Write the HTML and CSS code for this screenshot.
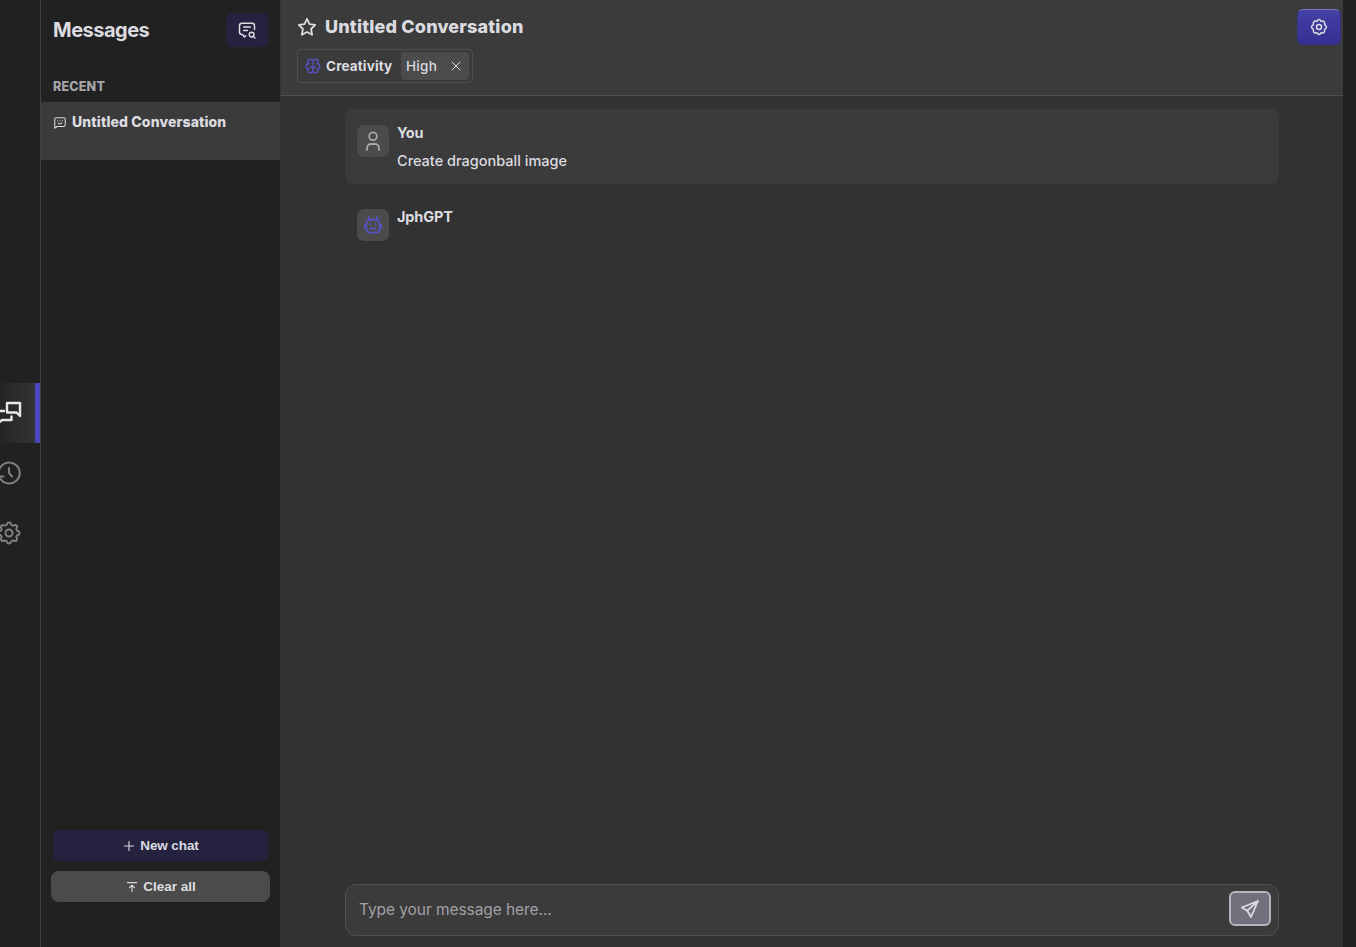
FILE: index.html
```
<!DOCTYPE html>
<html lang="en">
<head>
  <meta charset="UTF-8" />
  <meta name="viewport" content="width=device-width, initial-scale=1.0" />
  <title>JphGPT</title>
  <link rel="stylesheet" href="styles.css">
</head>
<body>
  <div class="app">
    <nav class="rail">
      <a class="rail-item active">
        <svg width="26" height="26" viewBox="0 0 26 26"><path d="M11 3h13v13l-3.500-3.500H11zM8 11H2M2 23.500l4-3.500h9.500v-3.500"/></svg>
      </a>
      <a class="rail-item">
        <svg width="26" height="26" viewBox="0 0 26 26"><path d="M3.300 16.500a10.500 10.500 0 1 0-.500-5M3 21v-4.500h4.500M13 8v5l3 3.500"/></svg>
      </a>
      <a class="rail-item">
        <svg width="28" height="28" viewBox="0 0 24 24"><path d="M10.325 4.317c.426-1.756 2.924-1.756 3.350 0a1.724 1.724 0 0 0 2.573 1.066c1.543-.940 3.310.826 2.370 2.370a1.724 1.724 0 0 0 1.065 2.572c1.756.426 1.756 2.924 0 3.350a1.724 1.724 0 0 0-1.066 2.573c.940 1.543-.826 3.310-2.370 2.370a1.724 1.724 0 0 0-2.572 1.065c-.426 1.756-2.924 1.756-3.350 0a1.724 1.724 0 0 0-2.573-1.066c-1.543.940-3.310-.826-2.370-2.370a1.724 1.724 0 0 0-1.065-2.572c-1.756-.426-1.756-2.924 0-3.350a1.724 1.724 0 0 0 1.066-2.573c-.940-1.543.826-3.310 2.370-2.370 1 .608 2.296.070 2.572-1.065z"/><circle cx="12" cy="12" r="3"/></svg>
      </a>
    </nav>

    <aside class="sidebar">
      <header class="sidebar-head">
        <h2>Messages</h2>
        <button class="search-btn">
          <svg width="20" height="20" viewBox="0 0 24 24"><path d="M8 8.500h8M8 12.500h4.500M10.500 19L9 20.500 6.500 17.500H6a3 3 0 0 1-3-3V7a3 3 0 0 1 3-3h12a3 3 0 0 1 3 3v4.500M19.500 19.500L21.500 21.500"/><circle cx="17.500" cy="17.500" r="2.800"/></svg>
        </button>
      </header>
      <h3>RECENT</h3>
      <div class="chat-item">
        <svg width="14" height="14" viewBox="0 0 24 24"><path d="M3 21V6a3 3 0 0 1 3-3h12a3 3 0 0 1 3 3v9a3 3 0 0 1-3 3H7zM8 8h.1M12 8h.1M16 8h.1M9 12c1.500 2 4.500 2 6 0"/></svg>
        <span>Untitled Conversation</span>
      </div>
      <footer class="sidebar-foot">
        <button class="new-chat">
          <svg width="10" height="10" viewBox="0 0 10 10"><path d="M5 .5v9M.5 5h9"/></svg>
          <span>New chat</span>
        </button>
        <button class="clear-all">
          <svg width="10" height="10" viewBox="0 0 10 10"><path d="M0 .6h10M5 10V3.500M2.500 5.700L5 3.200l2.500 2.500"/></svg>
          <span>Clear all</span>
        </button>
      </footer>
    </aside>

    <main class="chat">
      <header class="chat-head">
        <div class="chat-title">
          <svg width="20" height="20" viewBox="0 0 20 20"><path d="M10 1.800l2.500 5.300 5.700.8-4.100 4.100 1 5.800-5.100-2.800-5.100 2.800 1-5.800L1.800 7.900l5.700-.8z"/></svg>
          <h1>Untitled Conversation</h1>
          <button class="settings-btn">
            <svg width="20" height="20" viewBox="0 0 24 24"><path d="M9.500 5.200q2.500-4.400 5 0q4.900-1.300 4.300 4q4.400 2.800 0 5.600q.6 5.300-4.300 4q-2.500 4.400-5 0q-4.900 1.300-4.300-4q-4.400-2.800 0-5.600q-.6-5.300 4.300-4z"/><circle cx="12" cy="12" r="3"/></svg>
          </button>
        </div>
        <div class="tag">
          <svg class="brain" width="18" height="18" viewBox="0 0 24 24"><path d="M15.500 13a3.500 3.500 0 0 0-3.500 3.500v1a3.500 3.500 0 0 0 7 0v-1.800M8.500 13a3.500 3.500 0 0 1 3.500 3.500v1a3.500 3.500 0 0 1-7 0v-1.800M17.500 16a3.500 3.500 0 0 0 0-7H17M19 9.300V6.500a3.500 3.500 0 0 0-7 0M6.500 16a3.500 3.500 0 0 1 0-7H7M5 9.300V6.500a3.500 3.500 0 0 1 7 0v10"/></svg>
          <b>Creativity</b>
          <span class="tag-value">
            <span>High</span>
            <svg width="10" height="10" viewBox="0 0 10 10"><path d="M1 1l8 8M9 1L1 9"/></svg>
          </span>
        </div>
      </header>

      <section class="messages">
        <article class="message user">
          <div class="avatar">
            <svg width="24" height="24" viewBox="0 0 24 24"><circle cx="12" cy="7.300" r="3.900"/><path d="M6 21v-2a4 4 0 0 1 4-4h4a4 4 0 0 1 4 4v2"/></svg>
          </div>
          <div>
            <h4 class="you">You</h4>
            <p>Create dragonball image</p>
          </div>
        </article>
        <article class="message">
          <div class="avatar bot">
            <svg width="20" height="20" viewBox="0 0 20 20"><path d="M5.500 1.500l1.300 3.500M14.500 1.500l-1.300 3.500M10 3.500v1.500M6.500 5h7a3 3 0 0 1 3 3v6.500a3 3 0 0 1-3 3h-7a3 3 0 0 1-3-3V8a3 3 0 0 1 3-3zM3.500 9l-1.800 1v3.500l1.800 1M16.500 9l1.800 1v3.500l-1.800 1M7.300 8.800v1M12.700 8.800v1M7 13.500h6"/></svg>
          </div>
          <h4 class="bot-name">JphGPT</h4>
        </article>
      </section>

      <form class="composer">
        <input type="text" placeholder="Type your message here..." />
        <button type="button" class="send-btn">
          <svg width="20" height="20" viewBox="0 0 20 20"><path d="M18 2L1.800 8.500l5.500 3.200L11 18zM7.300 11.700L18 2"/></svg>
        </button>
      </form>
    </main>
  </div>
</body>
</html>
```
FILE: styles.css
```
* {
  box-sizing: border-box;
}

body {
  margin: 0;
  font-family: Inter, Roboto, sans-serif;
  background: #212121;
  color: #dcdce0;
  overflow: hidden;
}

h1, h2, h3, h4, p {
  margin: 0;
}

button, input {
  font: inherit;
  color: inherit;
  border: none;
  padding: 0;
}

svg {
  fill: none;
  stroke: currentColor;
  stroke-width: 1.8;
  stroke-linecap: round;
  stroke-linejoin: round;
  flex: none;
}

span, h1, h2, h3, h4, b, p {
  white-space: nowrap;
}

.app {
  display: flex;
  height: 100vh;
  padding-right: 13px;
}

.rail {
  width: 41px;
  display: flex;
  flex-direction: column;
  justify-content: center;
  padding-top: 22px;
  padding-bottom: 24px;
  border-right: 1px solid #414141;
}

.rail-item {
  height: 60px;
  display: flex;
  align-items: center;
  color: #808080;
}

.rail-item svg {
  margin-left: -4px;
  stroke-width: 2;
}

.rail-item:last-child svg {
  margin-left: -5px;
  stroke-width: 1.7;
}

.rail-item.active {
  color: #e8e8e8;
  background: linear-gradient(90deg, #252525, #333);
  border-right: 5px solid #4b47bd;
}

.rail-item.active svg {
  stroke-width: 2.4;
}

.sidebar {
  width: 239px;
  display: flex;
  flex-direction: column;
  background: #212121;
}

.sidebar-head {
  display: flex;
  justify-content: space-between;
  align-items: center;
  padding: 13px 12px 0;
  height: 47px;
}

h2 {
  font-size: 20px;
  line-height: 24px;
  letter-spacing: -0.5px;
}

.search-btn {
  width: 42px;
  height: 34px;
  display: grid;
  place-items: center;
  border-radius: 5px;
  background: #25223f;
}

h3 {
  margin: 32px 12px 0;
  height: 23px;
  font-size: 12.5px;
  font-weight: 800;
  line-height: 16px;
  letter-spacing: 0.2px;
  color: #a6a6aa;
}

.chat-item {
  height: 58px;
  display: flex;
  align-items: flex-start;
  gap: 5px;
  padding: 11px 12px;
  background: #3b3b3b;
  font-size: 14px;
  line-height: 18px;
  font-weight: 800;
  letter-spacing: 0.13px;
}

.chat-item svg {
  margin-top: 3px;
}

.sidebar-foot {
  display: flex;
  flex-direction: column;
  gap: 10px;
  margin-top: auto;
  padding: 0 10px 45px;
}

.sidebar-foot button {
  height: 31px;
  display: flex;
  align-items: center;
  justify-content: center;
  gap: 6px;
  padding-left: 2px;
  font: bold 13.5px "Liberation Sans", Arial, sans-serif;
}

.sidebar-foot svg {
  stroke-width: 1.1;
}

.new-chat {
  margin: 0 2px;
  border-radius: 5px;
  background: #25223f;
}

.new-chat span {
  letter-spacing: -0.1px;
}

.clear-all {
  border-radius: 8px;
  background: #4b4b4b;
}

.chat {
  flex: 1;
  display: flex;
  flex-direction: column;
  background: #323232;
  border-left: 1px solid #353535;
}

.chat-head {
  height: 96px;
  padding: 9px 2px 0 16px;
  background: #3b3b3b;
  border-bottom: 1px solid #505050;
}

.chat-title {
  height: 36px;
  display: flex;
  align-items: center;
  gap: 8px;
}

h1 {
  font-size: 18px;
  font-weight: 800;
  line-height: 24px;
  letter-spacing: 0.17px;
}

.settings-btn {
  width: 44px;
  height: 36px;
  margin-left: auto;
  display: grid;
  place-items: center;
  border: 1px solid #37338a;
  border-top-color: #7774bd;
  border-radius: 6px;
  background: linear-gradient(#4441a5, #352f91);
}

.tag {
  width: 176px;
  height: 34px;
  margin-top: 4px;
  display: flex;
  align-items: center;
  padding: 0 3px 0 6px;
  border: 1px solid #505050;
  border-radius: 4px;
  font-size: 13.5px;
}

.tag b {
  letter-spacing: 0.15px;
}

.brain {
  color: #5650bd;
  margin-right: 4px;
}

.tag-value {
  width: 68px;
  height: 28px;
  display: flex;
  align-items: center;
  justify-content: space-between;
  margin-left: auto;
  padding: 0 8px 0 5px;
  border-radius: 4px;
  background: #4b4b4b;
  font-weight: 500;
  letter-spacing: 0.3px;
}

.tag-value svg {
  stroke-width: 1;
}

.messages {
  flex: 1;
  display: flex;
  flex-direction: column;
  gap: 9px;
  padding: 13px 64px 0;
}

.message {
  min-height: 75px;
  display: flex;
  gap: 8px;
  padding: 15px 12px 0;
  border-radius: 8px;
}

.message.user {
  background: #3b3b3b;
}

.avatar {
  width: 32px;
  height: 32px;
  display: grid;
  place-items: center;
  border-radius: 7px;
  background: #4b4b4b;
  color: #a7a7ad;
  margin-top: 1px;
}

.avatar.bot {
  color: #5751cf;
}

.avatar.bot svg {
  stroke-width: 1.4;
}

h4 {
  font-size: 14.5px;
  line-height: 18px;
  letter-spacing: -0.15px;
}

.message p {
  margin-top: 10px;
  font-size: 14.5px;
  font-weight: 500;
  line-height: 18px;
}

.composer {
  height: 52px;
  margin: 0 64px 11px;
  display: flex;
  align-items: center;
  padding: 0 7px 3px 13px;
  border: 1px solid #505050;
  border-radius: 11px;
  background: #3b3b3b;
}

.composer input {
  flex: 1;
  height: 32px;
  padding-top: 2px;
  background: none;
  outline: none;
  font-size: 15.5px;
  letter-spacing: -0.07px;
}

.composer input::placeholder {
  color: #a0a0a6;
}

.send-btn {
  width: 42px;
  height: 35px;
  display: grid;
  place-items: center;
  border: 2px solid #b5b5bd;
  border-radius: 6px;
  background: #70717d;
}
```
